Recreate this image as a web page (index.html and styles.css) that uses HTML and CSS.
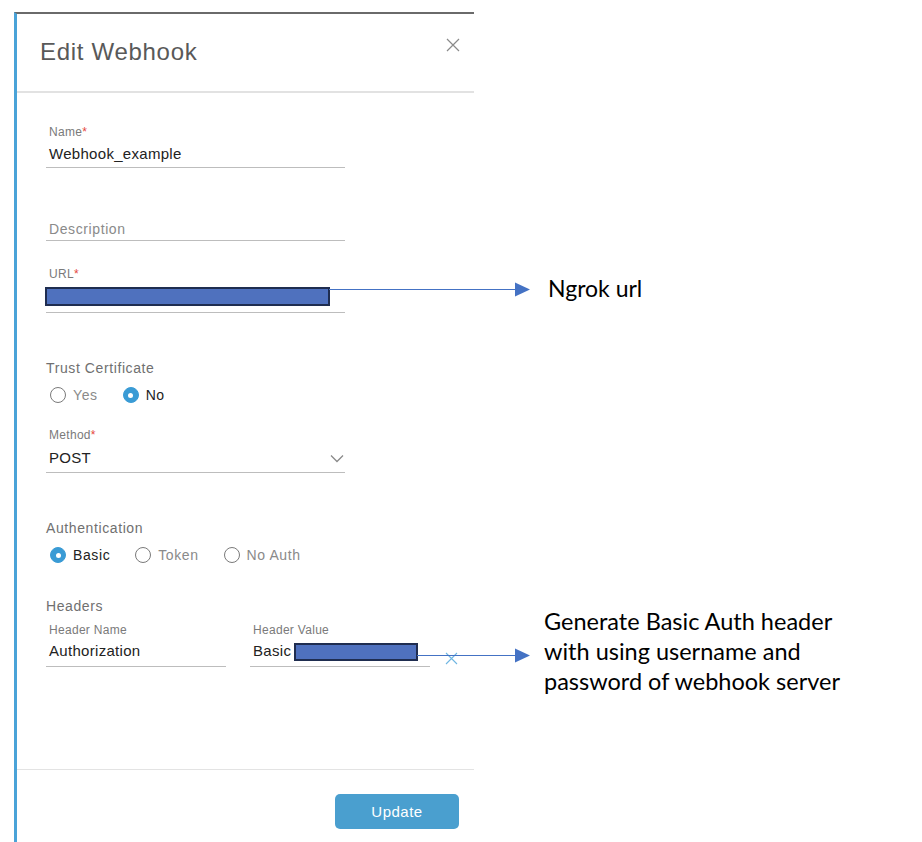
FILE: index.html
```html
<!DOCTYPE html>
<html lang="en">
<head>
<meta charset="utf-8">
<title>Edit Webhook</title>
<link rel="stylesheet" href="styles.css">
</head>
<body>
<div class="page">
  <div class="panel">
    <div class="header">
      <h1 class="title">Edit Webhook</h1>
      <svg class="close" width="14" height="14" viewBox="0 0 14 14"><path d="M1 1L13 13M13 1L1 13" stroke="#8a8a8a" stroke-width="1.2" fill="none"/></svg>
    </div>
    <div class="body">
      <div class="field f-name">
        <div class="label">Name<span class="req">*</span></div>
        <div class="value">Webhook_example</div>
      </div>
      <div class="field f-desc">
        <div class="placeholder">Description</div>
      </div>
      <div class="field f-url">
        <div class="label">URL<span class="req">*</span></div>
        <div class="value"><span class="redact redact-url"></span></div>
      </div>
      <div class="section-title s-trust">Trust Certificate</div>
      <div class="radios">
        <label class="radio"><span class="dot"></span><span class="rtext">Yes</span></label>
        <label class="radio on"><span class="dot"></span><span class="rtext">No</span></label>
      </div>
      <div class="field f-method">
        <div class="label">Method<span class="req">*</span></div>
        <div class="value select">POST
          <svg class="chev" width="14" height="9" viewBox="0 0 14 9"><path d="M1 1.5L7 7.5L13 1.5" stroke="#8a8a8a" stroke-width="1.3" fill="none"/></svg>
        </div>
      </div>
      <div class="section-title s-auth">Authentication</div>
      <div class="radios">
        <label class="radio on"><span class="dot"></span><span class="rtext">Basic</span></label>
        <label class="radio"><span class="dot"></span><span class="rtext">Token</span></label>
        <label class="radio"><span class="dot"></span><span class="rtext">No Auth</span></label>
      </div>
      <div class="section-title s-headers">Headers</div>
      <div class="header-row">
        <div class="field f-half">
          <div class="label">Header Name</div>
          <div class="value">Authorization</div>
        </div>
        <div class="field f-half">
          <div class="label">Header Value</div>
          <div class="value">Basic <span class="redact redact-hdr"></span></div>
        </div>
        <svg class="del" width="13" height="13" viewBox="0 0 13 13"><path d="M1 1L12 12M12 1L1 12" stroke="#6fb6e2" stroke-width="1.1" fill="none"/></svg>
      </div>
    </div>
    <div class="footer">
      <button class="btn">Update</button>
    </div>
  </div>

  <svg class="arrows" width="922" height="842" viewBox="0 0 922 842">
    <line x1="329" y1="289.5" x2="516" y2="289.5" stroke="#4472c4" stroke-width="1"/>
    <polygon points="515,282.5 530,289.5 515,296.5" fill="#4472c4"/>
    <line x1="417" y1="655.5" x2="516" y2="655.5" stroke="#4472c4" stroke-width="1"/>
    <polygon points="515,648.5 530,655.5 515,662.5" fill="#4472c4"/>
  </svg>
  <div class="note note-url">Ngrok url</div>
  <div class="note note-auth">Generate Basic Auth header<br>with using username and<br>password of webhook server</div>
</div>
</body>
</html>
```
FILE: styles.css
```css
* { box-sizing: border-box; }
html, body { margin: 0; padding: 0; background: #fff; }
body { font-family: "Liberation Sans", Arial, sans-serif; color: #222; }

.page { position: relative; width: 922px; height: 842px; padding: 12px 0 0 14px; overflow: hidden; }

.panel {
  width: 460px;
  height: 830px;
  border-top: 2px solid #6a6a6a;
  border-left: 3px solid #4aa3d8;
  display: flex;
  flex-direction: column;
}

.header {
  height: 79px;
  border-bottom: 2px solid #e2e2e2;
  display: flex;
  align-items: flex-start;
  justify-content: space-between;
  padding: 23px 14px 0 23px;
}
.title {
  margin: 0;
  font-weight: normal;
  font-size: 24px;
  line-height: 30px;
  letter-spacing: 0.7px;
  color: #595959;
}
.close { margin-top: 1px; }

.body { flex: 1; padding: 31px 0 0 29px; }

.field { width: 299px; border-bottom: 1px solid #bdbdbd; padding: 0 0 3px 3px; }
.label { font-size: 12px; line-height: 16px; color: #7a7a7a; letter-spacing: 0.3px; }
.req { color: #e5473d; }
.value { font-size: 15px; line-height: 20px; color: #222; letter-spacing: 0.3px; margin-top: 7px; }
.f-name .value { margin-top: 4px; }
.placeholder { font-size: 14px; line-height: 20px; color: #8a8a8a; letter-spacing: 0.6px; }

.f-desc { margin-top: 51px; padding-bottom: 1px; }
.f-url { margin-top: 25px; padding-bottom: 5px; }
.f-url .value { margin-top: 3px; height: 22px; }

.redact {
  display: inline-block;
  background: #4f71be;
  border: 2px solid #1f2d50;
  vertical-align: middle;
}
.redact-url { width: 285px; height: 19px; margin-left: -4px; }
.redact-hdr { width: 124px; height: 18px; margin-left: -2px; vertical-align: -5px; }

.section-title { font-size: 14px; line-height: 20px; color: #707070; letter-spacing: 0.6px; }
.s-trust { margin-top: 45px; }
.s-auth { margin-top: 45px; }
.s-headers { margin-top: 31px; }

.radios { display: flex; gap: 25px; margin-top: 7px; padding-left: 4px; height: 20px; align-items: center; }
.radio { display: flex; align-items: center; gap: 7px; font-size: 14px; letter-spacing: 0.6px; color: #8a8a8a; }
.dot {
  width: 16px; height: 16px; border-radius: 50%;
  border: 1.5px solid #7a7a7a;
  display: inline-block; position: relative;
}
.radio.on { color: #222; }
.radio.on .dot { background: #3a9bd5; border-color: #3a9bd5; }
.radio.on .dot::after {
  content: ""; position: absolute; left: 50%; top: 50%;
  width: 5px; height: 5px; margin: -2.5px 0 0 -2.5px;
  background: #fff; border-radius: 50%;
}

.f-method { margin-top: 22px; padding-bottom: 4px; }
.f-method .value { margin-top: 5px; }
.select { display: flex; justify-content: space-between; align-items: center; padding-right: 1px; }

.header-row { display: flex; gap: 24px; margin-top: 6px; align-items: flex-end; }
.f-half { width: 180px; padding-bottom: 5px; }
.f-half .value { margin-top: 3px; }
.del { margin-left: -9px; margin-bottom: 2px; }

.footer {
  height: 73px;
  border-top: 1px solid #e3e3e3;
  display: flex;
  justify-content: flex-end;
  align-items: flex-start;
  padding: 24px 15px 0 0;
}
.btn {
  width: 124px; height: 35px;
  background: #4a9fcf; color: #fff;
  border: none; border-radius: 5px;
  font-family: "Liberation Sans", Arial, sans-serif;
  font-size: 15px; letter-spacing: 0.5px;
}

.arrows { position: absolute; left: 0; top: 0; pointer-events: none; }
.note { position: absolute; font-family: Lato, "Open Sans", sans-serif; color: #000; }
.note-url { left: 548px; top: 273px; font-size: 23px; line-height: 30px; }
.note-auth { left: 544px; top: 606px; font-size: 23.5px; line-height: 30px; }
```
